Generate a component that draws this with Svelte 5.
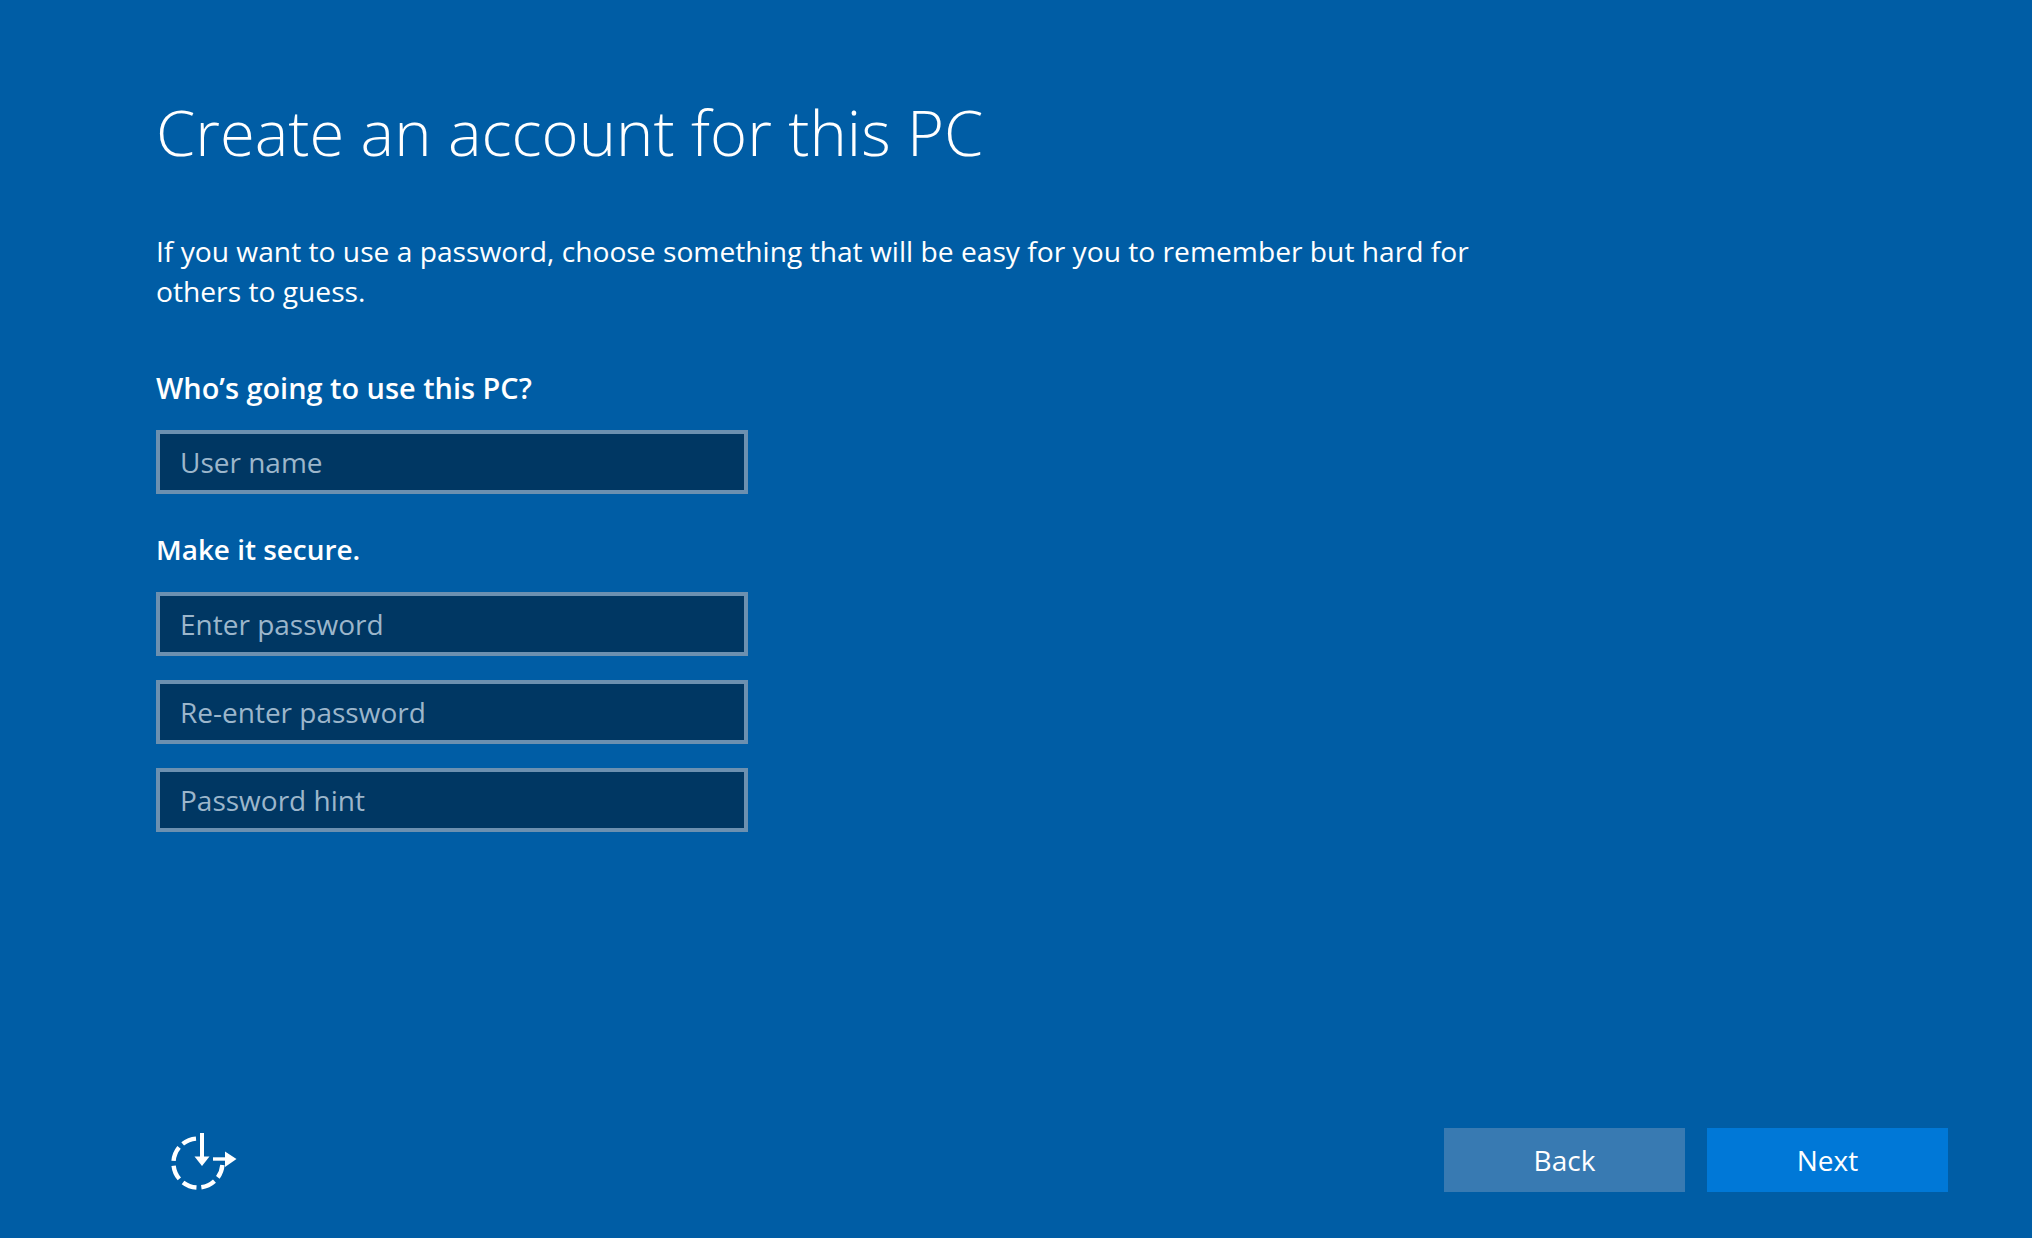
<script>
  const secure = ["Enter password", "Re-enter password", "Password hint"];
</script>

<main class="page">
  <section class="form">
    <h1>Create an account for this PC</h1>
    <p class="intro">If you want to use a password, choose something that will be easy for you to remember but hard for others to guess.</p>

    <h2 class="first">Who’s going to use this PC?</h2>
    <input type="text" placeholder="User name" />

    <h2 class="second">Make it secure.</h2>
    <div class="fields">
      {#each secure as hint}
        <input type="password" placeholder={hint} />
      {/each}
    </div>
  </section>

  <footer>
    <svg class="ease" width="72" height="64" viewBox="0 0 72 64" fill="none" stroke="#fff" aria-hidden="true">
      <path d="M26 10.6 A24.5 24.5 0 1 0 52.4 37" stroke-width="4.4" stroke-dasharray="14.5 5" />
      <path d="M32 5 V32" stroke-width="4" />
      <path d="M24.5 28.5 L32 38 L39.5 28.5 Z" fill="#fff" stroke="none" />
      <path d="M43 31 H58" stroke-width="3.4" />
      <path d="M55 23.5 L66.5 31 L55 39 Z" fill="#fff" stroke="none" />
    </svg>
    <div class="buttons">
      <button class="back">Back</button>
      <button class="next">Next</button>
    </div>
  </footer>
</main>

<style>
  :global(body) {
    margin: 0;
    background: #005da5;
  }

  .page {
    height: 1238px;
    box-sizing: border-box;
    padding: 0 84px 46px 156px;
    display: flex;
    flex-direction: column;
    justify-content: space-between;
    color: #fff;
    font-family: "Open Sans", "Noto Sans", sans-serif;
    overflow: hidden;
  }

  h1 {
    margin: 87px 0 0;
    font-size: 63.3px;
    line-height: 90px;
    font-weight: 300;
  }

  .intro {
    margin: 54px 0 0;
    width: 1340px;
    font-size: 28.2px;
    line-height: 40px;
  }

  h2 {
    margin: 0;
    line-height: 40px;
    font-weight: 600;
  }

  .first {
    font-size: 28.9px;
    margin-top: 57px;
    margin-bottom: 22px;
  }

  .second {
    font-size: 27.9px;
    margin-top: 35px;
    margin-bottom: 23px;
  }

  .fields {
    display: flex;
    flex-direction: column;
    gap: 24px;
  }

  input {
    display: block;
    width: 592px;
    height: 64px;
    box-sizing: border-box;
    padding: 0 20px;
    background: #003763;
    border: 4px solid #6c90b0;
    border-radius: 0;
    color: #fff;
    font: inherit;
    font-size: 28px;
    outline: none;
  }

  input::placeholder {
    color: #9cb6cb;
    opacity: 1;
  }

  footer {
    display: flex;
    justify-content: space-between;
    align-items: flex-end;
  }

  .ease {
    margin-left: 14px;
  }

  .buttons {
    display: flex;
    gap: 22px;
  }

  button {
    width: 241px;
    height: 64px;
    border: 0;
    color: #fff;
    font: inherit;
    font-size: 28px;
    padding: 0;
  }

  .back {
    background: #387ab2;
  }

  .next {
    background: #0078d7;
  }
</style>
